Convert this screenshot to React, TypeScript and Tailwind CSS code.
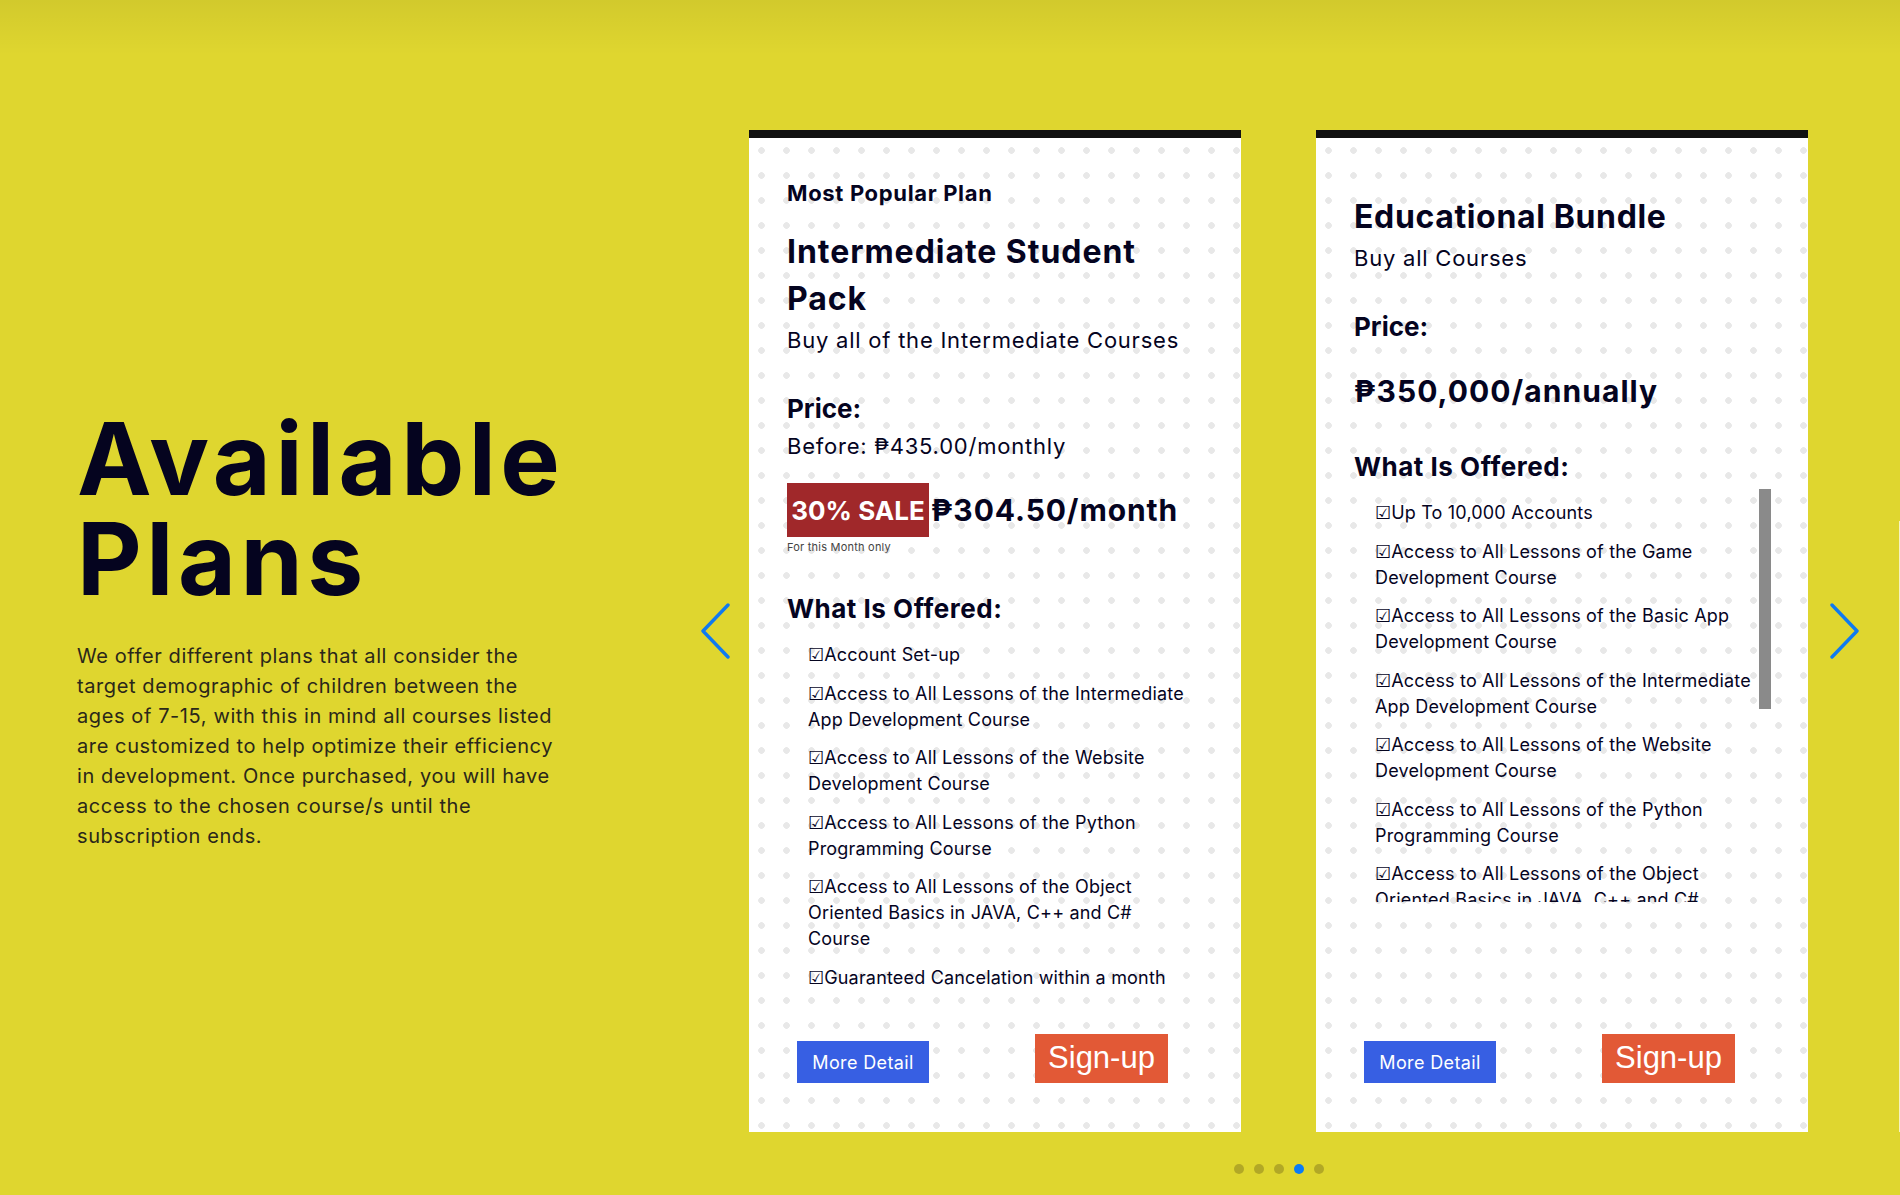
import type { ReactNode } from "react";

const ink = "text-[#05041f]";
const sans = "[font-family:Inter,'Noto_Sans',sans-serif]";

const intermediateItems = [
  "Account Set-up",
  "Access to All Lessons of the Intermediate App Development Course",
  "Access to All Lessons of the Website Development Course",
  "Access to All Lessons of the Python Programming Course",
  "Access to All Lessons of the Object Oriented Basics in JAVA, C++ and C# Course",
  "Guaranteed Cancelation within a month",
];

const bundleItems = [
  "Up To 10,000 Accounts",
  "Access to All Lessons of the Game Development Course",
  "Access to All Lessons of the Basic App Development Course",
  "Access to All Lessons of the Intermediate App Development Course",
  "Access to All Lessons of the Website Development Course",
  "Access to All Lessons of the Python Programming Course",
  "Access to All Lessons of the Object Oriented Basics in JAVA, C++ and C# Course",
  "Guaranteed Cancelation within a month",
];

function Card({ children, className = "" }: { children: ReactNode; className?: string }) {
  return (
    <div
      className={`flex h-[1002px] w-[492px] shrink-0 flex-col border-t-8 border-[#111111] bg-white bg-[radial-gradient(circle,#e8e8e8_3px,transparent_3.6px)] bg-[length:25px_25px] pl-[38px] pr-[37px] ${ink} ${className}`}
    >
      {children}
      <div className="mt-auto mb-[49px] flex items-end">
        <button className="ml-[10px] flex h-[42px] w-[132px] items-center justify-center bg-[#375fe3] text-[18px] tracking-[0.02em] text-white">
          More Detail
        </button>
        <button className="ml-[106px] flex h-[49px] w-[133px] items-center justify-center bg-[#e25936] text-[31px] text-white [font-family:'Liberation_Sans',Arial,sans-serif]">
          Sign-up
        </button>
      </div>
    </div>
  );
}

function OfferList({ items, scroll = false }: { items: string[]; scroll?: boolean }) {
  return (
    <div className="relative mt-[4px] max-h-[413px] overflow-hidden">
      <ul className="flex flex-col gap-[12.5px] pt-[11px] pr-[12px] pl-[21px] text-[18px] leading-[26px] tracking-[0.01em]">
        {items.map((item) => (
          <li key={item}>☑{item}</li>
        ))}
      </ul>
      {scroll ? <div className="absolute top-0 right-0 h-[220px] w-[12px] bg-[#8a8a8a]" /> : null}
    </div>
  );
}

function Arrow({ dir }: { dir: "left" | "right" }) {
  return (
    <svg width="30" height="56" viewBox="0 0 30 56" fill="none" className="shrink-0">
      <polyline
        points={dir === "left" ? "27,2 2,28 27,54" : "3,2 28,28 3,54"}
        stroke="#0f7af0"
        strokeWidth="3.4"
        strokeLinecap="round"
        strokeLinejoin="round"
      />
    </svg>
  );
}

export default function App() {
  return (
    <div
      className={`relative flex h-[1195px] w-full overflow-hidden bg-[#dfd62f] bg-[linear-gradient(to_bottom,rgba(0,0,0,0.06),rgba(0,0,0,0)_55px)] ${sans}`}
    >
      <div className="w-[701px] shrink-0 pt-[409px] pl-[77px]">
        <h1 className={`text-[100px] leading-[100px] font-bold tracking-[0.045em] ${ink}`}>
          Available
          <br />
          Plans
        </h1>
        <p className="mt-[32px] max-w-[485px] text-[20px] leading-[30px] tracking-[0.03em] text-[#2a271a]">
          We offer different plans that all consider the target demographic of children between the ages of 7-15,
          with this in mind all courses listed are customized to help optimize their efficiency in development. Once
          purchased, you will have access to the chosen course/s until the subscription ends.
        </p>
      </div>

      <div className="flex flex-col pt-[130px]">
        <div className="flex items-center">
          <Arrow dir="left" />
          <div className="ml-[18px] flex gap-[75px]">
            <Card>
              <p className="pt-[40px] text-[22px] leading-[30px] font-bold tracking-[0.03em]">Most Popular Plan</p>
              <h2 className="mt-[20px] text-[32px] leading-[47px] font-bold tracking-[0.03em]">
                Intermediate Student Pack
              </h2>
              <p className="mt-[3px] text-[22px] leading-[30px] tracking-[0.035em]">
                Buy all of the Intermediate Courses
              </p>
              <h3 className="mt-[36px] text-[26px] leading-[36px] font-bold">Price:</h3>
              <p className="mt-[4px] text-[22px] leading-[30px] tracking-[0.035em]">Before: ₱435.00/monthly</p>
              <div className="mt-[22px] flex items-center">
                <span className="flex h-[54px] w-[142px] items-center justify-center bg-[#a0282a] text-[26px] font-bold text-white">
                  30% SALE
                </span>
                <span className="ml-[2px] text-[30px] leading-[54px] font-bold tracking-[0.03em]">₱304.50/month</span>
              </div>
              <p className="mt-[2px] text-[11px] leading-[16px] tracking-[0.02em] text-[#444]">For this Month only</p>
              <h3 className="mt-[36px] text-[26px] leading-[36px] font-bold tracking-[0.02em]">What Is Offered:</h3>
              <OfferList items={intermediateItems} />
            </Card>

            <Card>
              <h2 className="pt-[55px] text-[32px] leading-[47px] font-bold tracking-[0.02em]">Educational Bundle</h2>
              <p className="mt-[3px] text-[22px] leading-[30px] tracking-[0.035em]">Buy all Courses</p>
              <h3 className="mt-[36px] text-[26px] leading-[36px] font-bold">Price:</h3>
              <p className="mt-[26px] text-[30px] leading-[40px] font-bold tracking-[0.035em]">₱350,000/annually</p>
              <h3 className="mt-[38px] text-[26px] leading-[36px] font-bold tracking-[0.02em]">What Is Offered:</h3>
              <OfferList items={bundleItems} scroll />
            </Card>
          </div>
          <div className="ml-[21px]">
            <Arrow dir="right" />
          </div>
        </div>

        <div className="mt-[32px] ml-[48px] flex w-[1059px] justify-center gap-[10px]">
          {[0, 1, 2, 3, 4].map((i) => (
            <span key={i} className={`h-[10px] w-[10px] rounded-full ${i === 3 ? "bg-[#0a7cf5]" : "bg-[#b2a826]"}`} />
          ))}
        </div>
      </div>

      <div className="absolute top-[521px] right-0 h-[611px] w-px bg-white/70" />
    </div>
  );
}
